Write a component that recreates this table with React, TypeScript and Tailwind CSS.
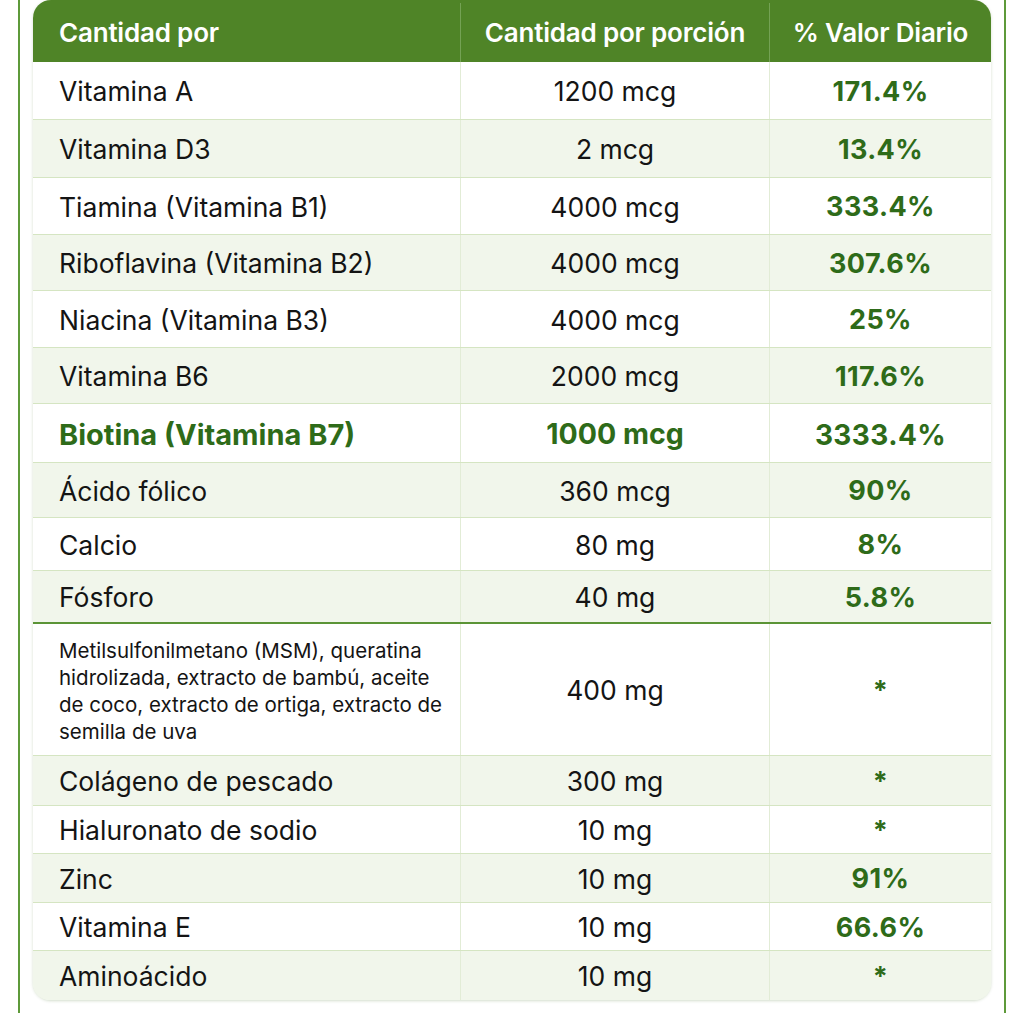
const ROWS: { name: string; qty: string; dv: string; h: number }[] = [
  { name: 'Vitamina A', qty: '1200 mcg', dv: '171.4%', h: 58 },
  { name: 'Vitamina D3', qty: '2 mcg', dv: '13.4%', h: 58 },
  { name: 'Tiamina (Vitamina B1)', qty: '4000 mcg', dv: '333.4%', h: 57 },
  { name: 'Riboflavina (Vitamina B2)', qty: '4000 mcg', dv: '307.6%', h: 56 },
  { name: 'Niacina (Vitamina B3)', qty: '4000 mcg', dv: '25%', h: 57 },
  { name: 'Vitamina B6', qty: '2000 mcg', dv: '117.6%', h: 56 },
  { name: 'Biotina (Vitamina B7)', qty: '1000 mcg', dv: '3333.4%', h: 59 },
  { name: 'Ácido fólico', qty: '360 mcg', dv: '90%', h: 55 },
  { name: 'Calcio', qty: '80 mg', dv: '8%', h: 53 },
  { name: 'Fósforo', qty: '40 mg', dv: '5.8%', h: 53 },
  { name: 'Metilsulfonilmetano (MSM), queratina hidrolizada, extracto de bambú, aceite de coco, extracto de ortiga, extracto de semilla de uva', qty: '400 mg', dv: '*', h: 132 },
  { name: 'Colágeno de pescado', qty: '300 mg', dv: '*', h: 50 },
  { name: 'Hialuronato de sodio', qty: '10 mg', dv: '*', h: 48 },
  { name: 'Zinc', qty: '10 mg', dv: '91%', h: 49 },
  { name: 'Vitamina E', qty: '10 mg', dv: '66.6%', h: 48 },
  { name: 'Aminoácido', qty: '10 mg', dv: '*', h: 49 },
];

export default function App() {
  return (
    <div className="min-h-[1013px] bg-white" style={{ fontFamily: 'Inter, "Noto Sans", sans-serif' }}>
      <div className="ml-[18px] w-[988px] min-h-[1013px] border-x-2 border-[#5e9a3a] px-[13px]">
        <div className="w-[958px] rounded-[18px] shadow-[0_1px_3px_rgba(80,120,50,0.25)]">
          {/* Header */}
          <div className="grid grid-cols-[427px_309px_222px] h-[62px] pt-[3px] bg-[#4f8427] rounded-t-[18px] text-white font-semibold text-[26px] tracking-[-0.2px]">
            <div className="flex items-center pl-[26px]">Cantidad por</div>
            <div className="flex items-center justify-center border-l border-[#74a254]">Cantidad por porción</div>
            <div className="flex items-center justify-center border-l border-[#74a254]">% Valor Diario</div>
          </div>

          {ROWS.map((r, i) => {
            const bio = r.name.startsWith('Biotina');
            const long = r.h > 100;
            const last = i === ROWS.length - 1;
            const divider = r.name === 'Fósforo' ? 'border-b-2 border-[#5b9436]' : last ? '' : 'border-b border-[#d5e5c2]';
            return (
              <div
                key={r.name}
                className={`grid grid-cols-[427px_309px_222px] ${i % 2 ? 'bg-[#f1f6eb]' : 'bg-white'} ${divider} ${last ? 'rounded-b-[16px]' : ''}`}
                style={{ height: r.h }}
              >
                <div
                  className={`flex items-center pl-[26px] pr-3 pt-[3px] ${bio ? 'text-[#2e6b19] font-bold text-[29px]' : 'text-[#141414]'} ${long ? 'text-[20.5px] leading-[27px]' : bio ? '' : 'text-[26.5px]'}`}
                >
                  {r.name}
                </div>
                <div className={`flex items-center justify-center pt-[3px] border-l border-[#e2ecd6] ${bio ? 'text-[#2e6b19] font-bold text-[28.5px]' : 'text-[#141414] text-[26.5px]'}`}>
                  {r.qty}
                </div>
                <div className={`flex items-center justify-center pt-[3px] border-l border-[#e2ecd6] text-[#2e6b19] font-bold tracking-[0.4px] ${bio ? 'text-[28px]' : 'text-[27px]'}`}>
                  {r.dv}
                </div>
              </div>
            );
          })}
        </div>
      </div>
    </div>
  );
}
